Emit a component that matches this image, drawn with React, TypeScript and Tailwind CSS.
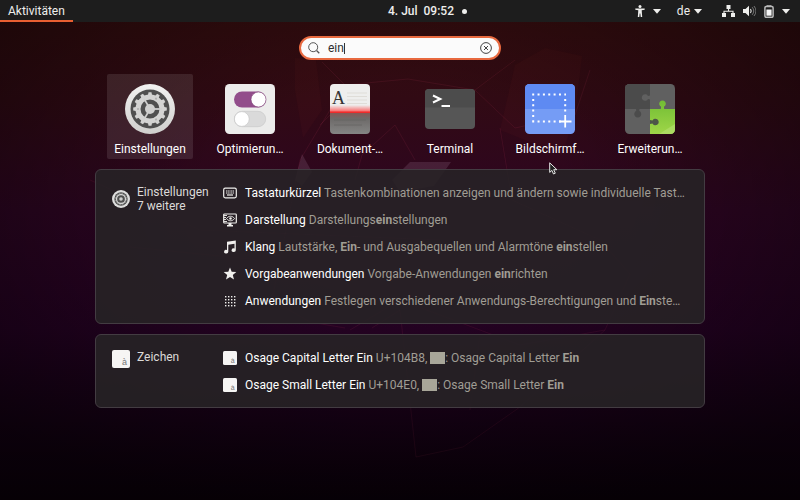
import type { ReactNode } from "react";

const TEETH = Array.from({ length: 12 }, (_, i) => i * 30);

function SettingsIcon({ className }: { className: string }) {
  return (
    <svg viewBox="0 0 50 50" className={className} aria-hidden="true">
      <defs>
        <linearGradient id="rim" x1="0" y1="0" x2="0" y2="1">
          <stop offset="0" stopColor="#f2f2f1" />
          <stop offset="1" stopColor="#cfcfcd" />
        </linearGradient>
      </defs>
      <circle cx="25" cy="25" r="25" fill="url(#rim)" />
      <circle cx="25" cy="25" r="19.5" fill="#4f4f4f" />
      <circle cx="25" cy="25" r="12" fill="none" stroke="#d3d3d2" strokeWidth="5" />
      {TEETH.map((a) => (
        <path key={a} d="M22.800 12 L23.500 8.2 H26.500 L27.200 12Z" fill="#d3d3d2" transform={`rotate(${a} 25 25)`} />
      ))}
      <circle cx="25" cy="25" r="5" fill="#cfcfce" />
      {[90, 210, 330].map((a) => (
        <path key={a} d="M25 22 V13" stroke="#cfcfce" strokeWidth="1.800" transform={`rotate(${a} 25 25)`} />
      ))}
      {[30, 150, 270].map((a) => (
        <circle key={a} cx="25" cy="13" r="1.1" fill="#b0b0af" transform={`rotate(${a} 25 25)`} />
      ))}
    </svg>
  );
}

function SmallSettingsIcon() {
  return (
    <svg viewBox="0 0 18 18" className="size-[18px] shrink-0" fill="none" aria-hidden="true">
      <circle cx="9" cy="9" r="9" fill="#dededd" />
      <circle cx="9" cy="9" r="6.700" fill="#4f4f4f" />
      <circle cx="9" cy="9" r="4.500" stroke="#d3d3d2" strokeWidth="1.300" />
      <circle cx="9" cy="9" r="5.500" stroke="#a9a9a8" strokeWidth=".8" strokeDasharray="1.440 1.440" />
      <circle cx="9" cy="9" r="1.800" fill="#cfcfce" />
    </svg>
  );
}

function TweaksIcon() {
  return (
    <svg viewBox="0 0 50 50" className="size-[50px]" aria-hidden="true">
      <rect width="50" height="50" rx="4.5" fill="#ececeb" />
      <rect x="9" y="7.5" width="32" height="16" rx="8" fill="#924d8b" />
      <circle cx="33.5" cy="15.5" r="7.5" fill="#fff" stroke="#7a3c74" strokeWidth=".6" />
      <rect x="9.3" y="27.3" width="31.4" height="15.4" rx="7.7" fill="#dadada" stroke="#c6c6c6" strokeWidth=".6" />
      <circle cx="16.8" cy="35" r="7.4" fill="#fff" stroke="#c0c0c0" strokeWidth=".6" />
    </svg>
  );
}

function ScannerIcon() {
  return (
    <svg viewBox="0 0 50 50" className="size-[50px]" aria-hidden="true">
      <defs>
        <clipPath id="page"><rect x="5" width="40" height="50" rx="4" /></clipPath>
        <linearGradient id="glow" x1="0" y1="0" x2="0" y2="1">
          <stop offset="0" stopColor="#f33" stopOpacity="0" />
          <stop offset="1" stopColor="#f33" stopOpacity=".75" />
        </linearGradient>
        <linearGradient id="lower" x1="0" y1="0" x2="0" y2="1">
          <stop offset="0" stopColor="#8a5552" />
          <stop offset=".3" stopColor="#6d6a69" />
          <stop offset="1" stopColor="#858584" />
        </linearGradient>
      </defs>
      <g clipPath="url(#page)">
        <rect x="5" width="40" height="28" fill="#eeeeed" />
        <path d="M22 9h20M22 12.5h20M22 16h20M22 19.500h20" stroke="#dfddd8" strokeWidth="1" />
        <rect x="5" y="21" width="40" height="7" fill="url(#glow)" />
        <rect x="5" y="28" width="40" height="22" fill="url(#lower)" />
        <path d="M9 36h32M9 41h28" stroke="#656463" strokeWidth=".8" />
        <rect x="5" y="27.500" width="40" height="1.500" fill="#ef2b2b" />
      </g>
      <text x="7" y="20" fontSize="18" fontFamily="Liberation Serif, serif" fill="#333">A</text>
    </svg>
  );
}

function TerminalIcon() {
  return (
    <svg viewBox="0 0 50 50" className="size-[50px]" aria-hidden="true">
      <rect y="5" width="50" height="40" rx="4" fill="#565656" />
      <path d="M0 23.500V9a4 4 0 0 1 4-4h42a4 4 0 0 1 4 4v14.500z" fill="#4c4c4c" />
      <path d="M8 11.500l7.300 3.500-7.300 3.500" fill="none" stroke="#fff" strokeWidth="2" />
      <path d="M16.500 22h8.500" stroke="#fff" strokeWidth="2" />
    </svg>
  );
}

function ScreenshotIcon() {
  return (
    <svg viewBox="0 0 50 50" className="size-[50px]" aria-hidden="true">
      <rect width="50" height="50" rx="4.500" fill="#759cf5" />
      <path d="M0 25V4.500A4.500 4.500 0 0 1 4.500 0h41A4.500 4.500 0 0 1 50 4.500V25z" fill="#5e8af2" />
      <path d="M7.200 10.500H41M7.200 37.500H36M8.200 14.900V37M40.200 14.900V31" fill="none" stroke="#fff" strokeWidth="2" strokeDasharray="2 3.350" />
      <path d="M34 37.500h12.500M40.200 31v12.500" stroke="#fff" strokeWidth="1.800" />
    </svg>
  );
}

function ExtensionsIcon() {
  return (
    <svg viewBox="0 0 50 50" className="size-[50px]" aria-hidden="true">
      <defs>
        <clipPath id="tile"><rect width="50" height="50" rx="4.500" /></clipPath>
        <linearGradient id="leaf" x1="0" y1="0" x2="0" y2="1">
          <stop offset="0" stopColor="#72bd34" />
          <stop offset="1" stopColor="#9fd648" />
        </linearGradient>
      </defs>
      <g clipPath="url(#tile)">
        <rect width="50" height="50" fill="#606060" />
        <rect width="25" height="25" fill="#4b4b4b" />
        <path d="M25 11.500l-2 .5a3.300 3.300 0 1 0 0 3l2 .5z" fill="#606060" />
        <path d="M11 25l.3 1.800a3.500 3.500 0 1 0 2.900 0L14.500 25z" fill="#4b4b4b" />
        <path d="M25 25h10.800l.3-2.200a3.300 3.300 0 1 1 2.800 0l.3 2.200H50v25H25z" fill="url(#leaf)" />
        <path d="M34 50L50 40V50z" fill="#b5e071" opacity=".6" />
        <path d="M25 36l2.500.5a3.300 3.300 0 1 1 0 3L25 40z" fill="#4d5548" />
      </g>
    </svg>
  );
}

function CharactersIcon({ className }: { className: string }) {
  return (
    <svg viewBox="0 0 18 18" className={className} aria-hidden="true">
      <rect width="18" height="18" rx="2" fill="#f6f5f4" />
      <text x="10" y="15" fontSize="9" fontFamily="Liberation Sans, sans-serif" fill="#777">à</text>
    </svg>
  );
}

const rowIcon = "size-[14px] shrink-0 text-[#f0efed]";

function KeyboardIcon() {
  return (
    <svg viewBox="0 0 14 14" className={rowIcon} fill="none" stroke="currentColor" aria-hidden="true">
      <rect x=".7" y="2.200" width="12.600" height="9.600" rx="1.500" strokeWidth="1.200" />
      <path d="M3 5h8M3 7h8" strokeWidth="1.200" strokeDasharray="1.200 .500" />
      <path d="M4 9h6" strokeWidth="1.200" />
    </svg>
  );
}

function DisplayIcon() {
  return (
    <svg viewBox="0 0 14 14" className={rowIcon} fill="none" stroke="currentColor" aria-hidden="true">
      <path d="M1.500 1h11a.8.800 0 0 1 .8.800v7.400a.8.800 0 0 1-.8.800h-11a.8.800 0 0 1-.8-.8V1.800a.8.800 0 0 1 .8-.8z" strokeWidth="1.200" />
      <path d="M1 2.500h3M1 4.500h2M1 6.500h2M1 8.500h3" strokeWidth=".9" />
      <path d="M3.500 5.500c2-3 6-3 8 0c-2 3-6 3-8 0z" />
      <circle cx="7.500" cy="5.500" r="1.300" fill="currentColor" stroke="none" />
      <path d="M5.500 10h3v2h1.500v1.500H4V12h1.500z" fill="currentColor" stroke="none" />
    </svg>
  );
}

function MusicIcon() {
  return (
    <svg viewBox="0 0 14 14" className={rowIcon} fill="currentColor" aria-hidden="true">
      <path d="M4 1.800L12.800.5v9.700a2.100 1.800 0 1 1-1.300-1.700V3.800L5.300 4.800v6.900a2.100 1.800 0 1 1-1.300-1.700z" />
    </svg>
  );
}

function StarIcon() {
  return (
    <svg viewBox="0 0 14 14" className={rowIcon} fill="currentColor" aria-hidden="true">
      <path d="M7 .6l1.700 4.200 4.600.3-3.500 2.900 1.200 4.500L7 10l-4 2.500L4.200 8 .7 5.100l4.600-.3z" />
    </svg>
  );
}

function GridIcon() {
  return (
    <svg viewBox="0 0 14 14" className={rowIcon} fill="currentColor" aria-hidden="true">
      {[2, 5, 8, 11].flatMap((x) =>
        [2, 5, 8, 11].map((y) => <rect key={`${x}-${y}`} x={x} y={y} width="1.400" height="1.400" />),
      )}
    </svg>
  );
}

function Triangle() {
  return (
    <svg viewBox="0 0 8 5" className="h-[5px] w-2" fill="#eeeeec" aria-hidden="true">
      <path d="M0 0h8L4 4.800z" />
    </svg>
  );
}

function Wallpaper() {
  return (
    <svg viewBox="0 0 800 500" preserveAspectRatio="xMidYMid slice" className="absolute inset-0 -z-10 h-full w-full" aria-hidden="true">
      <defs>
        <linearGradient id="dusk" x1="0" y1="0" x2="0" y2="1">
          <stop offset="0" stopColor="#340d0d" />
          <stop offset=".2" stopColor="#310a14" />
          <stop offset=".42" stopColor="#2d0522" />
          <stop offset=".66" stopColor="#260224" />
          <stop offset=".84" stopColor="#180117" />
          <stop offset="1" stopColor="#0b000a" />
        </linearGradient>
        <radialGradient id="shade" cx=".5" cy=".38" r=".68">
          <stop offset=".3" stopColor="#000" stopOpacity="0" />
          <stop offset=".8" stopColor="#000" stopOpacity=".36" />
          <stop offset="1" stopColor="#000" stopOpacity=".5" />
        </radialGradient>
      </defs>
      <rect width="800" height="500" fill="url(#dusk)" />
      <path d="M295 58L316 60 322 110 303 138 295 90zM515 65L545 48 582 56 575 115 562 155 500 130z" fill="#ff5540" opacity=".03" />
      <path d="M302 154L312 172 302 186 295 180zM410 162h41l-17 24-34 6-8-12z" fill="#c9a0c0" opacity=".16" />
      <g fill="none" stroke="#e04070" opacity=".1">
        <path d="M322 62L345 85 408 79 475 90 515 60M345 85L300 160 272 300 310 322 345 328M320 125L350 95M395 125L362 155 355 180M395 125L415 160M475 90L515 128 575 115M500 128L512 200 600 240 630 274 605 330 520 407M90 180L200 230 440 240M130 247L260 260M400 310L416 457 463 447 520 407M400 310L372 328M470 410L480 334M350 330L400 300 520 345 605 330M575 115L590 70" />
      </g>
      <rect width="800" height="500" fill="url(#shade)" />
    </svg>
  );
}

const apps: { name: string; icon: ReactNode; selected?: boolean }[] = [
  { name: "Einstellungen", icon: <SettingsIcon className="size-[50px]" />, selected: true },
  { name: "Optimierun…", icon: <TweaksIcon /> },
  { name: "Dokument-…", icon: <ScannerIcon /> },
  { name: "Terminal", icon: <TerminalIcon /> },
  { name: "Bildschirmf…", icon: <ScreenshotIcon /> },
  { name: "Erweiterun…", icon: <ExtensionsIcon /> },
];

const Glyph = () => <span className="inline-block h-3 w-[15px] bg-[#a8a699] align-[-2px]" />;

type Result = { title: string; icon: ReactNode; text: ReactNode };

const settings: Result[] = [
  { title: "Tastaturkürzel", icon: <KeyboardIcon />, text: "Tastenkombinationen anzeigen und ändern sowie individuelle Tast…" },
  { title: "Darstellung", icon: <DisplayIcon />, text: <>Darstellungs<b>ein</b>stellungen</> },
  { title: "Klang", icon: <MusicIcon />, text: <>Lautstärke, <b>Ein</b>- und Ausgabequellen und Alarmtöne <b>ein</b>stellen</> },
  { title: "Vorgabeanwendungen", icon: <StarIcon />, text: <>Vorgabe-Anwendungen <b>ein</b>richten</> },
  { title: "Anwendungen", icon: <GridIcon />, text: <>Festlegen verschiedener Anwendungs-Berechtigungen und <b>Ein</b>ste…</> },
];

const characters: Result[] = [
  { title: "Osage Capital Letter Ein", icon: <CharactersIcon className="size-[14px] shrink-0" />, text: <>U+104B8, <Glyph />: Osage Capital Letter <b>Ein</b></> },
  { title: "Osage Small Letter Ein", icon: <CharactersIcon className="size-[14px] shrink-0" />, text: <>U+104E0, <Glyph />: Osage Small Letter <b>Ein</b></> },
];

function ResultPanel({ name, more, icon, results }: { name: string; more?: string; icon: ReactNode; results: Result[] }) {
  return (
    <section className="flex w-full items-start rounded-md border border-[#433c42] bg-[#272226]/90 px-4 py-[9px]">
      <button className="flex w-[111px] shrink-0 items-center gap-[7px] pt-1.5 text-left leading-[14px] text-[#dcdad8]">
        {icon}
        <span className="self-start whitespace-nowrap">
          <span className="block">{name}</span>
          {more && <span className="block">{more}</span>}
        </span>
      </button>
      <ul className="min-w-0 flex-1">
        {results.map((r) => (
          <li key={r.title}>
            <button className="flex h-[27px] w-full items-center gap-2 text-left">
              {r.icon}
              <span className="min-w-0 whitespace-nowrap">
                <span className="text-white">{r.title}</span>{" "}
                <span className="text-[#a09d94]">{r.text}</span>
              </span>
            </button>
          </li>
        ))}
      </ul>
    </section>
  );
}

export default function App() {
  return (
    <div className="relative isolate flex min-h-screen flex-col overflow-hidden bg-[#10000f] font-['Roboto','Noto_Sans',sans-serif] text-xs text-white">
      <Wallpaper />
      <header className="grid h-[22px] grid-cols-[1fr_auto_1fr] items-stretch bg-[#1d1d1d] text-[#eeeeec]">
        <button className="justify-self-start border-b-2 border-[#e95f32] px-2 pt-0.5">Aktivitäten</button>
        <button className="flex items-center gap-2 pl-[55px] font-medium">
          <span className="whitespace-pre">4. Jul  09:52</span>
          <span className="size-[5px] rounded-full bg-[#eeeeec]" />
        </button>
        <div className="flex items-center gap-4 justify-self-end pr-[10px]">
          <button aria-label="Barrierefreiheit" className="flex items-center gap-2">
            <svg viewBox="0 0 10 12" className="h-3 w-[10px]" fill="#eeeeec" aria-hidden="true">
              <circle cx="5" cy="1.500" r="1.500" />
              <path d="M.3 3.500h9.400v1.200L6.700 5.300 7.200 12H5.700L5.300 8.500h-.6L4.300 12H2.800l.5-6.700-3-.6z" />
            </svg>
            <Triangle />
          </button>
          <button className="flex items-center gap-1">de <Triangle /></button>
          <button aria-label="Systemmenü" className="ml-1 flex items-center gap-2">
            <svg viewBox="0 0 13 12" className="h-3 w-[13px]" fill="#eeeeec" aria-hidden="true">
              <path d="M4.500 0h4v4h-4zM0 8h4v4H0zM9 8h4v4H9z" />
              <path d="M6.500 4v2.200M2 8V6.200h9V8" fill="none" stroke="#eeeeec" strokeWidth="1.100" />
            </svg>
            <svg viewBox="0 0 13 12" className="h-3 w-[13px]" aria-hidden="true">
              <path d="M0 4h2.500L6 .8v10.400L2.500 8H0z" fill="#eeeeec" />
              <path d="M7.500 4a3.500 3.500 0 0 1 0 4" fill="none" stroke="#eeeeec" strokeWidth="1.100" />
              <path d="M9.200 2.200a6 6 0 0 1 0 7.600M11 1a8 8 0 0 1 0 10" fill="none" stroke="#777" />
            </svg>
            <svg viewBox="0 0 10 13" className="h-[13px] w-[10px]" aria-hidden="true">
              <path d="M3 1.200V.3h4v.9" fill="none" stroke="#aaa" />
              <rect x=".9" y="1.500" width="8.200" height="10.800" rx="1.200" fill="none" stroke="#bbb" strokeWidth="1.500" />
              <rect x="2.400" y="4.500" width="5.200" height="6.200" fill="#f4f4f4" />
            </svg>
            <Triangle />
          </button>
        </div>
      </header>

      <main className="mx-auto flex w-full max-w-[642px] flex-col items-center px-4 pt-[14px]">
        <div className="flex h-6 w-[202px] items-center rounded-full border-2 border-[#e8693f] bg-[#fbfbfb] px-[7px] text-[#2e2e2e]">
          <svg viewBox="0 0 12 12" className="mr-2 size-3" fill="none" stroke="#555" aria-hidden="true">
            <circle cx="5.200" cy="5.200" r="4.500" />
            <path d="M8.500 8.500L11.300 11.300" strokeWidth="1.300" />
          </svg>
          <input type="text" aria-label="Suchen" defaultValue="ein" className="field-sizing-content bg-transparent outline-none" />
          <span className="h-[11px] w-px bg-[#333]" />
          <button aria-label="Löschen" className="ml-auto">
            <svg viewBox="0 0 12 12" className="size-3" fill="none" stroke="#444" aria-hidden="true">
              <circle cx="6" cy="6" r="5.400" />
              <path d="M4 4l4 4M8 4l-4 4" />
            </svg>
          </button>
        </div>

        <ul className="mt-[14px] flex gap-[14px]">
          {apps.map((app) => (
            <li key={app.name}>
              <button
                className={
                  app.selected
                    ? "flex w-[86px] flex-col items-center rounded-xs bg-white/10 pt-[10px] pb-px"
                    : "flex w-[86px] flex-col items-center rounded-xs pt-[10px] pb-px"
                }
              >
                {app.icon}
                <span className="mt-[7px] leading-[17px] whitespace-nowrap">{app.name}</span>
              </button>
            </li>
          ))}
        </ul>

        <div className="mt-[10px] flex w-full flex-col gap-[10px]">
          <ResultPanel name="Einstellungen" more="7 weitere" icon={<SmallSettingsIcon />} results={settings} />
          <ResultPanel name="Zeichen" icon={<CharactersIcon className="size-[18px] shrink-0" />} results={characters} />
        </div>
      </main>

      <svg viewBox="0 0 9 13" className="pointer-events-none absolute top-[162px] left-[549px] h-[13px] w-[9px]" aria-hidden="true">
        <path d="M.7.8v9.600l2.200-2 1.600 3.600 1.800-.8-1.600-3.500h3.200z" fill="#222" stroke="#e6e6e6" />
      </svg>
    </div>
  );
}
